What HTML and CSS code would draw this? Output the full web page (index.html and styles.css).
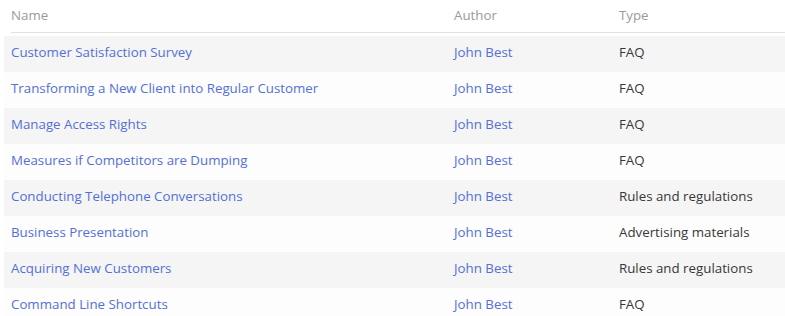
FILE: index.html
```html
<!DOCTYPE html>
<html>
<head>
<meta charset="utf-8">
<link rel="stylesheet" href="styles.css">
</head>
<body>
<div class="list">
  <div class="head">
    <div class="c-name">Name</div>
    <div class="c-author">Author</div>
    <div class="c-type">Type</div>
  </div>
  <div class="row odd"><a class="c-name link">Customer Satisfaction Survey</a><a class="c-author link">John Best</a><div class="c-type">FAQ</div></div>
  <div class="row"><a class="c-name link">Transforming a New Client into Regular Customer</a><a class="c-author link">John Best</a><div class="c-type">FAQ</div></div>
  <div class="row odd"><a class="c-name link">Manage Access Rights</a><a class="c-author link">John Best</a><div class="c-type">FAQ</div></div>
  <div class="row"><a class="c-name link">Measures if Competitors are Dumping</a><a class="c-author link">John Best</a><div class="c-type">FAQ</div></div>
  <div class="row odd"><a class="c-name link">Conducting Telephone Conversations</a><a class="c-author link">John Best</a><div class="c-type">Rules and regulations</div></div>
  <div class="row"><a class="c-name link">Business Presentation</a><a class="c-author link">John Best</a><div class="c-type">Advertising materials</div></div>
  <div class="row odd"><a class="c-name link">Acquiring New Customers</a><a class="c-author link">John Best</a><div class="c-type">Rules and regulations</div></div>
  <div class="row"><a class="c-name link">Command Line Shortcuts</a><a class="c-author link">John Best</a><div class="c-type">FAQ</div></div>
</div>
</body>
</html>
```
FILE: styles.css
```css
html, body {
  margin: 0;
  padding: 0;
  background: #ffffff;
}
body {
  font-family: "Open Sans", "Noto Sans", sans-serif;
  font-size: 13.3px;
  color: #333333;
  overflow: hidden;
}
.list {
  padding-left: 4px;
}
.head, .row {
  display: grid;
  grid-template-columns: 443px 165px 1fr;
  align-items: center;
}
.head {
  height: 30px;
  padding-bottom: 2px;
  margin-left: 7px;
  border-bottom: 1px solid #e2e2e2;
  color: #9a9a9a;
  margin-bottom: 3px;
}
.row {
  height: 32px;
  padding-bottom: 4px;
  padding-left: 7px;
  background: #fdfdfd;
}
.row.odd {
  background: #f5f5f5;
}
.link {
  color: #5470d6;
  text-decoration: none;
}
.row .c-type {
  color: #383838;
}
```
